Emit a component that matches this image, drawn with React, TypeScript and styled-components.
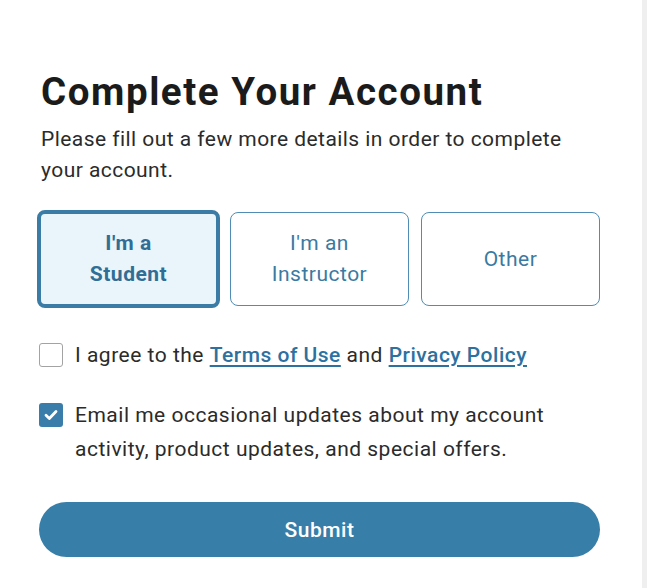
import React, { useState } from 'react';
import styled, { createGlobalStyle } from 'styled-components';

const GlobalStyle = createGlobalStyle`
  html, body {
    margin: 0;
    padding: 0;
    background-color: #efefef;
    font-family: Roboto, 'Liberation Sans', Arial, sans-serif;
  }
`;

const Page = styled.div`
  display: flex;
  min-height: 100vh;
`;

const Panel = styled.main`
  width: 642px;
  min-height: 100vh;
  background-color: #ffffff;
  box-sizing: border-box;
  padding: 70px 0 0 39px;
`;

const Form = styled.form`
  width: 561px;
  display: flex;
  flex-direction: column;
`;

const Title = styled.h1`
  margin: 0 0 0 2px;
  font-size: 38.5px;
  line-height: 44px;
  font-weight: 700;
  color: #1b1b1b;
  letter-spacing: 1.55px;
`;

const Intro = styled.p`
  margin: 10px 0 0 2px;
  font-size: 21px;
  line-height: 31px;
  letter-spacing: 0.45px;
  color: #2b2b2b;
`;

const RoleGrid = styled.div`
  display: grid;
  grid-template-columns: repeat(3, 1fr);
  gap: 12px;
  margin-top: 26px;
`;

const RoleCard = styled.button<{ selected: boolean }>`
  height: ${(props) => (props.selected ? 98 : 94)}px;
  margin: ${(props) => (props.selected ? '-2px' : '0')};
  box-sizing: border-box;
  display: flex;
  align-items: center;
  justify-content: center;
  text-align: center;
  font-family: inherit;
  font-size: 21px;
  line-height: 31px;
  letter-spacing: 0.5px;
  font-weight: ${(props) => (props.selected ? 700 : 400)};
  color: ${(props) => (props.selected ? '#306e95' : '#3a7aa2')};
  background-color: ${(props) => (props.selected ? '#eaf5fb' : '#ffffff')};
  border: ${(props) => (props.selected ? '4px solid #3a7ca6' : '1.5px solid #4f8db4')};
  border-radius: 8px;
  padding: 0 16px;
  cursor: pointer;
`;

const CheckRow = styled.label<{ spacing: number }>`
  display: flex;
  align-items: flex-start;
  gap: 12px;
  margin-top: ${(props) => props.spacing}px;
  font-size: 21px;
  line-height: 34px;
  letter-spacing: 0.5px;
  color: #2b2b2b;
  cursor: pointer;
`;

const Box = styled.span<{ checked: boolean }>`
  flex: 0 0 auto;
  width: 24px;
  height: 24px;
  margin-top: 5px;
  box-sizing: border-box;
  border-radius: 3px;
  display: flex;
  align-items: center;
  justify-content: center;
  background-color: ${(props) => (props.checked ? '#3a7dab' : '#ffffff')};
  border: ${(props) => (props.checked ? 'none' : '1.5px solid #a3a3a3')};
`;

const LinkText = styled.a`
  color: #2d71a0;
  font-weight: 500;
  text-decoration: underline;
  text-underline-offset: 3px;
  text-decoration-thickness: 1.5px;
`;

const Submit = styled.button`
  margin-top: 36px;
  height: 55px;
  border: none;
  border-radius: 28px;
  background-color: #377ea9;
  color: #ffffff;
  font-family: inherit;
  font-size: 21px;
  letter-spacing: 0.5px;
  font-weight: 500;
  cursor: pointer;
`;

function Check() {
  return (
    <svg width="14" height="12" viewBox="0 0 14 12" fill="none">
      <path
        d="M2 6.3 L5.3 9.4 L12 2.6"
        stroke="#ffffff"
        strokeWidth="2.8"
        strokeLinecap="round"
        strokeLinejoin="round"
      />
    </svg>
  );
}

const roles = [
  { id: 'student', first: "I'm a", second: 'Student' },
  { id: 'instructor', first: "I'm an", second: 'Instructor' },
  { id: 'other', first: 'Other', second: '' },
];

function App() {
  const [role, setRole] = useState('student');
  const [agree, setAgree] = useState(false);
  const [updates, setUpdates] = useState(true);

  return (
    <Page>
      <GlobalStyle />
      <Panel>
        <Form onSubmit={(e) => e.preventDefault()}>
          <Title>Complete Your Account</Title>
          <Intro>
            Please fill out a few more details in order to complete your account.
          </Intro>
          <RoleGrid>
            {roles.map((r) => (
              <RoleCard
                key={r.id}
                type="button"
                selected={role === r.id}
                onClick={() => setRole(r.id)}
              >
                <span>
                  {r.first}
                  {r.second && <br />}
                  {r.second}
                </span>
              </RoleCard>
            ))}
          </RoleGrid>
          <CheckRow spacing={32} onClick={() => setAgree(!agree)}>
            <Box checked={agree}>{agree && <Check />}</Box>
            <span>
              I agree to the <LinkText href="#terms">Terms of Use</LinkText> and{' '}
              <LinkText href="#privacy">Privacy Policy</LinkText>
            </span>
          </CheckRow>
          <CheckRow spacing={26} onClick={() => setUpdates(!updates)}>
            <Box checked={updates}>{updates && <Check />}</Box>
            <span>
              Email me occasional updates about my account activity, product updates, and
              special offers.
            </span>
          </CheckRow>
          <Submit type="submit">Submit</Submit>
        </Form>
      </Panel>
    </Page>
  );
}

export default App;
